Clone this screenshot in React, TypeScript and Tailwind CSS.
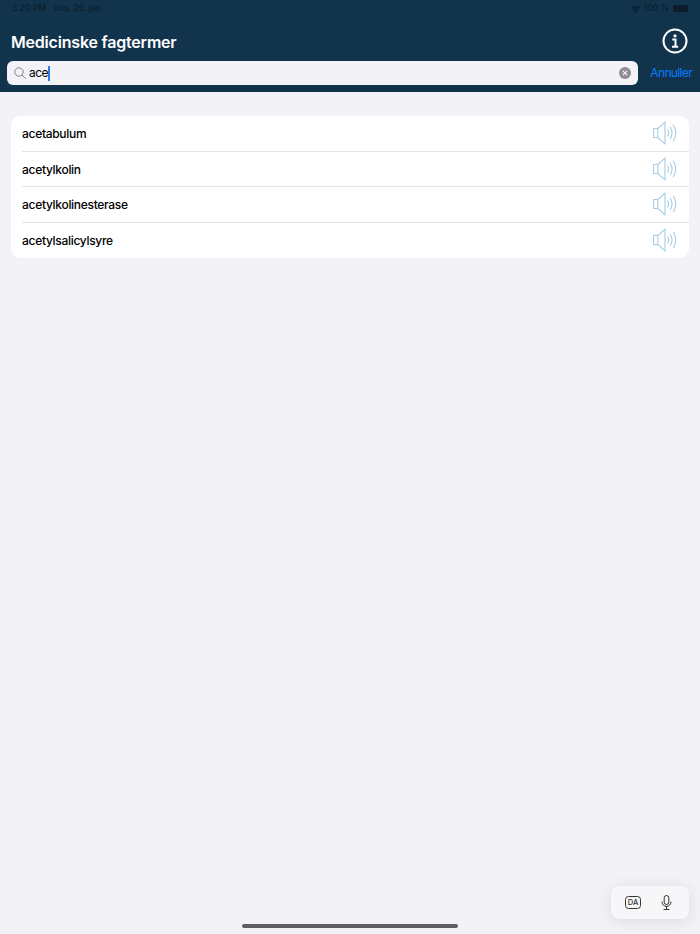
const terms = ['acetabulum', 'acetylkolin', 'acetylkolinesterase', 'acetylsalicylsyre']

function SpeakerIcon() {
    return (
        <svg width="24" height="24" viewBox="0 0 24 24" fill="none" stroke="#a9cde3" strokeWidth="1.1">
            <path d="M.6 7.5h4.2v9H.6z" />
            <path d="M4.8 7.5L12 1.2v21.6l-7.2-6.3" />
            <path d="M14.5 8.5c1.3 2.2 1.3 4.8 0 7" />
            <path d="M17.2 6c2.2 3.6 2.2 8.4 0 12" />
            <path d="M20.2 3.8c3.2 5.2 3.2 11.2 0 16.4" />
        </svg>
    )
}

function StatusBar() {
    return (
        <div className="flex h-[17px] items-center justify-between pl-[12px] pr-[12px] text-[8.5px] font-medium text-[#0b1d2b]">
            <div className="flex gap-[8px]">
                <span>3.20 PM</span>
                <span>ons. 26. jan.</span>
            </div>
            <div className="flex items-center gap-[3px]">
                <svg width="11" height="8" viewBox="0 0 11 8" fill="#0b1d2b">
                    <path d="M5.5 8L3.8 6.1a2.4 2.4 0 0 1 3.4 0z" />
                    <path d="M3.2 5.4L2.3 4.4a4.6 4.6 0 0 1 6.4 0l-.9 1a3.4 3.4 0 0 0-4.6 0z" />
                    <path d="M1.7 3.8L.6 2.7a7.1 7.1 0 0 1 9.8 0L9.3 3.8a5.6 5.6 0 0 0-7.6 0z" />
                </svg>
                <span>100 %</span>
                <div className="ml-[1px] h-[7px] w-[15px] rounded-[2px] bg-[#0b1d2b]" />
            </div>
        </div>
    )
}

function SearchBar() {
    return (
        <div className="flex items-center pl-[7px] pr-[8px] pt-[1px]">
            <div className="flex h-[24px] w-[631px] items-center rounded-[6px] bg-[#f2f2f7] pl-[7px] pr-[7px]">
                <svg width="12" height="12" viewBox="0 0 12 12" fill="none" stroke="#85858b" strokeWidth="1">
                    <circle cx="5" cy="5" r="4.2" />
                    <path d="M8.1 8.1l3.4 3.4" strokeLinecap="round" />
                </svg>
                <span className="ml-[3px] text-[12px] tracking-[-0.5px] text-black">ace</span>
                <div className="h-[15px] w-[2px] bg-[#2a7de1]" />
                <div className="ml-auto flex h-[12px] w-[12px] items-center justify-center rounded-full bg-[#8e8e93]">
                    <svg width="6" height="6" viewBox="0 0 6 6" stroke="#f2f2f7" strokeWidth="1.2">
                        <path d="M.8.8l4.4 4.4M5.2.8L.8 5.2" />
                    </svg>
                </div>
            </div>
            <span className="ml-auto text-[12px] tracking-[-0.65px] text-[#0a7aff]">Annuller</span>
        </div>
    )
}

export default function App() {
    return (
        <div className="relative h-[934px] w-[700px] overflow-hidden bg-[#f2f2f7] font-['Inter',sans-serif]">
            <header className="h-[92px] bg-[#11344c]">
                <StatusBar />
                <div className="flex h-[43px] items-center justify-between pl-[11px] pr-[12px] pt-[5px]">
                    <h1 className="pt-[1px] text-[16px] font-semibold tracking-[-0.2px] text-white">Medicinske fagtermer</h1>
                    <svg width="26" height="26" viewBox="0 0 26 26" fill="none" stroke="white">
                        <circle cx="13" cy="13" r="11.5" strokeWidth="2" />
                        <circle cx="13" cy="7.8" r="1.6" fill="white" stroke="none" />
                        <path d="M10.3 11.5h3.2v7M10 18.8h6.2" strokeWidth="2" />
                    </svg>
                </div>
                <SearchBar />
            </header>

            <ul className="mx-[11px] mt-[24px] rounded-[9px] bg-white pl-[11px]">
                {terms.map((term, i) => (
                    <li
                        key={term}
                        className={`flex h-[35.5px] items-center justify-between pr-[12px] ${
                            i < terms.length - 1 ? 'border-b border-[#e4e4e8]' : ''
                        }`}
                    >
                        <span className="pt-[2px] text-[12px] font-medium tracking-[-0.3px] text-black">{term}</span>
                        <SpeakerIcon />
                    </li>
                ))}
            </ul>

            <div className="absolute bottom-[15px] left-[611px] flex h-[33px] w-[78px] items-center justify-between rounded-[8px] bg-[#f7f7fa] pl-[14px] pr-[17px] shadow-[0_2px_16px_rgba(0,0,0,0.1)]">
                <div className="flex h-[13px] w-[16px] items-center justify-center rounded-[3.5px] border border-[#333] text-[7.5px] font-medium text-[#333]">
                    DA
                </div>
                <svg width="11" height="15" viewBox="0 0 11 15" fill="none" stroke="#333" strokeWidth="1">
                    <rect x="3.2" y="0.5" width="4.6" height="9" rx="2.3" />
                    <path d="M1 7c0 6 9 6 9 0M5.5 11.5v2.5M3 14.5h5" strokeLinecap="round" />
                </svg>
            </div>

            <div className="absolute bottom-[6px] left-[242px] h-[4px] w-[216px] rounded-full bg-[#5f5f63]" />
        </div>
    )
}
